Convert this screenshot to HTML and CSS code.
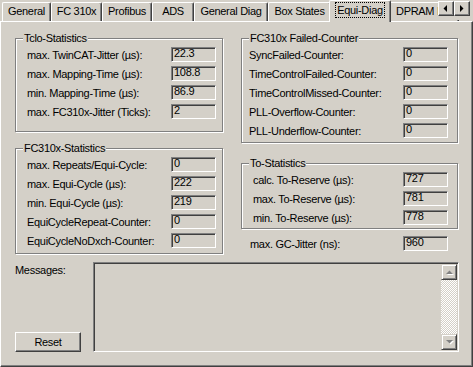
FILE: index.html
```html
<!DOCTYPE html>
<html>
<head>
    <title>Equi-Diag</title>
    <link rel="stylesheet" href="styles.css">
</head>
<body>
    <div class="window">
        <div class="tab-strip">
            <div class="tabs">
                <div class="tab">General</div>
                <div class="tab">FC 310x</div>
                <div class="tab">Profibus</div>
                <div class="tab">ADS</div>
                <div class="tab">General Diag</div>
                <div class="tab">Box States</div>
                <div class="tab active"><span class="focus">Equi-Diag</span></div>
                <div class="tab">DPRAM Info</div>
            </div>
            <div class="tab-scroll">
                <button class="spin"><svg width="14" height="13" viewBox="0 0 14 13"><polygon points="8,3 8,10 4.5,6.5" fill="#000"/></svg></button>
                <button class="spin"><svg width="14" height="13" viewBox="0 0 14 13"><polygon points="5,3 5,10 8.5,6.5" fill="#000"/></svg></button>
            </div>
        </div>

        <div class="panel">
            <div class="columns">
                <div class="column column-left">
                    <div class="group group-tclo">
                        <div class="group-title">Tclo-Statistics</div>
                        <div class="rows">
                            <div class="row"><span>max. TwinCAT-Jitter (µs):</span><div class="field">22.3</div></div>
                            <div class="row"><span>max. Mapping-Time (µs):</span><div class="field">108.8</div></div>
                            <div class="row"><span>min. Mapping-Time (µs):</span><div class="field">86.9</div></div>
                            <div class="row"><span>max. FC310x-Jitter (Ticks):</span><div class="field">2</div></div>
                        </div>
                    </div>
                    <div class="group group-fcstat">
                        <div class="group-title">FC310x-Statistics</div>
                        <div class="rows">
                            <div class="row"><span>max. Repeats/Equi-Cycle:</span><div class="field">0</div></div>
                            <div class="row"><span>max. Equi-Cycle (µs):</span><div class="field">222</div></div>
                            <div class="row"><span>min. Equi-Cycle (µs):</span><div class="field">219</div></div>
                            <div class="row"><span>EquiCycleRepeat-Counter:</span><div class="field">0</div></div>
                            <div class="row"><span>EquiCycleNoDxch-Counter:</span><div class="field">0</div></div>
                        </div>
                    </div>
                </div>

                <div class="column column-right">
                    <div class="group group-failed">
                        <div class="group-title">FC310x Failed-Counter</div>
                        <div class="rows">
                            <div class="row"><span>SyncFailed-Counter:</span><div class="field">0</div></div>
                            <div class="row"><span>TimeControlFailed-Counter:</span><div class="field">0</div></div>
                            <div class="row"><span>TimeControlMissed-Counter:</span><div class="field">0</div></div>
                            <div class="row"><span>PLL-Overflow-Counter:</span><div class="field">0</div></div>
                            <div class="row"><span>PLL-Underflow-Counter:</span><div class="field">0</div></div>
                        </div>
                    </div>
                    <div class="group group-to">
                        <div class="group-title">To-Statistics</div>
                        <div class="rows">
                            <div class="row"><span>calc. To-Reserve (µs):</span><div class="field">727</div></div>
                            <div class="row"><span>max. To-Reserve (µs):</span><div class="field">781</div></div>
                            <div class="row"><span>min. To-Reserve (µs):</span><div class="field">778</div></div>
                        </div>
                    </div>
                    <div class="row gc-row"><span>max. GC-Jitter (ns):</span><div class="field">960</div></div>
                </div>
            </div>

            <div class="messages-area">
                <div class="messages-side">
                    <div class="messages-label">Messages:</div>
                    <button class="push-button">Reset</button>
                </div>
                <div class="messages-box">
                    <div class="messages-text"></div>
                    <div class="scrollbar">
                        <div class="scroll-btn"><svg width="14" height="14" viewBox="0 0 14 14"><polygon points="4,9 11,9 7.5,5.5" fill="#fff" transform="translate(1,1)"/><polygon points="4,9 11,9 7.5,5.5" fill="#808080"/></svg></div>
                        <div class="scroll-track"></div>
                        <div class="scroll-btn"><svg width="14" height="14" viewBox="0 0 14 14"><polygon points="4,5 11,5 7.5,8.5" fill="#fff" transform="translate(1,1)"/><polygon points="4,5 11,5 7.5,8.5" fill="#808080"/></svg></div>
                    </div>
                </div>
            </div>
        </div>
    </div>
</body>
</html>
```

FILE: styles.css
```css
body {
    margin: 0;
    background: #d4d0c8;
    font-family: "Liberation Sans", Arial, sans-serif;
    font-size: 11px;
    letter-spacing: -0.3px;
    color: #000;
}
.window {
    width: 473px;
    height: 367px;
    display: flex;
    flex-direction: column;
    overflow: hidden;
}

/* tab strip */
.tab-strip {
    height: 21px;
    flex-shrink: 0;
    position: relative;
}
.tabs {
    display: flex;
    align-items: flex-start;
    padding-left: 2px;
    white-space: nowrap;
}
.tab {
    flex-shrink: 0;
    box-sizing: border-box;
    height: 19px;
    margin-top: 2px;
    padding: 0;
    text-align: center;
    line-height: 17px;
    border: 1px solid #fff;
    border-bottom: none;
    border-right-color: #404040;
    border-radius: 2px 2px 0 0;
    box-shadow: inset -1px 0 #808080;
}
.tab:nth-child(1) { width: 49px; }
.tab:nth-child(2) { width: 51px; }
.tab:nth-child(3) { width: 50px; }
.tab:nth-child(4) { width: 42px; }
.tab:nth-child(5) { width: 74px; }
.tab:nth-child(6) { width: 63px; }
.tab:nth-child(7) { width: 62px; }
.tab:nth-child(8) { width: 70px; padding-left: 6px; text-align: left; }
.tab.active {
    position: relative;
    z-index: 1;
    height: 22px;
    margin: 0 -2px;
    padding-top: 2px;
    background: #d4d0c8;
    line-height: 14px;
}
.focus {
    display: inline-block;
    outline: 1px dotted #000;
    padding: 0 1px;
}
.tab-scroll {
    position: absolute;
    top: 0;
    right: 0;
    width: 35px;
    height: 20px;
    display: flex;
    align-items: flex-start;
    padding-top: 1px;
    box-sizing: border-box;
    background: #d4d0c8;
}
.spin {
    width: 16px;
    height: 15px;
    padding: 0;
    margin: 0;
    border: 1px solid;
    border-color: #fff #404040 #404040 #fff;
    box-shadow: inset -1px -1px #808080;
    background: #d4d0c8;
    display: flex;
    align-items: center;
    justify-content: center;
}

/* panel */
.panel {
    flex: 1;
    box-sizing: border-box;
    border-top: 1px solid #fff;
    border-left: 1px solid #fff;
    border-right: 1px solid #404040;
    border-bottom: 1px solid #404040;
    box-shadow: inset -1px -1px #808080;
    padding: 16px 0 0 14px;
}
.columns {
    display: flex;
    gap: 18px;
}
.column-left {
    width: 208px;
}
.column-right {
    width: 217px;
}

/* group boxes */
.group {
    box-sizing: border-box;
    border: 1px solid #808080;
    box-shadow: inset 1px 1px #fff, 1px 1px #fff;
}
.group-title {
    display: table;
    margin: -7px 0 0 7px;
    padding: 0 1px;
    line-height: 13px;
    background: #d4d0c8;
}
.rows {
    display: flex;
    flex-direction: column;
    gap: 4px;
    margin-top: 2px;
}
.row {
    display: flex;
    justify-content: space-between;
    align-items: center;
    height: 15px;
}
.group-tclo {
    height: 94px;
}
.group-tclo .rows,
.group-fcstat .rows {
    padding: 0 6px 0 11px;
}
.group-fcstat {
    height: 106px;
    margin-top: 16px;
}
.group-failed {
    height: 105px;
}
.group-failed .rows {
    padding: 0 9px 0 7px;
}
.group-to {
    height: 66px;
    margin-top: 20px;
}
.group-to .rows {
    padding: 0 9px 0 11px;
}
.gc-row {
    margin-top: 7px;
    padding: 0 10px 0 9px;
}
.field {
    box-sizing: border-box;
    width: 45px;
    height: 15px;
    padding-left: 2px;
    line-height: 11px;
    border: 1px solid;
    border-color: #808080 #fff #fff #808080;
    box-shadow: inset 1px 1px #404040;
}

/* messages */
.messages-area {
    display: flex;
    margin-top: 8px;
}
.messages-side {
    width: 78px;
    display: flex;
    flex-direction: column;
    justify-content: space-between;
}
.messages-label {
    margin-top: 2px;
    line-height: 13px;
}
.push-button {
    width: 66px;
    height: 20px;
    padding: 0;
    font: inherit;
    letter-spacing: inherit;
    color: #000;
    background: #d4d0c8;
    border: 1px solid;
    border-color: #fff #404040 #404040 #fff;
    box-shadow: inset -1px -1px #808080;
}
.messages-box {
    box-sizing: border-box;
    width: 366px;
    height: 90px;
    display: flex;
    border: 1px solid;
    border-color: #808080 #fff #fff #808080;
    box-shadow: inset 1px 1px #404040;
    padding: 1px;
}
.messages-text {
    flex: 1;
}
.scrollbar {
    width: 16px;
    display: flex;
    flex-direction: column;
}
.scroll-btn {
    box-sizing: border-box;
    height: 16px;
    border: 1px solid;
    border-color: #d4d0c8 #404040 #404040 #d4d0c8;
    box-shadow: inset 1px 1px #fff, inset -1px -1px #808080;
    display: flex;
    align-items: center;
    justify-content: center;
}
.scroll-track {
    flex: 1;
    background: repeating-conic-gradient(#fff 0 25%, #d4d0c8 0 50%) 0 0 / 2px 2px;
}
```
